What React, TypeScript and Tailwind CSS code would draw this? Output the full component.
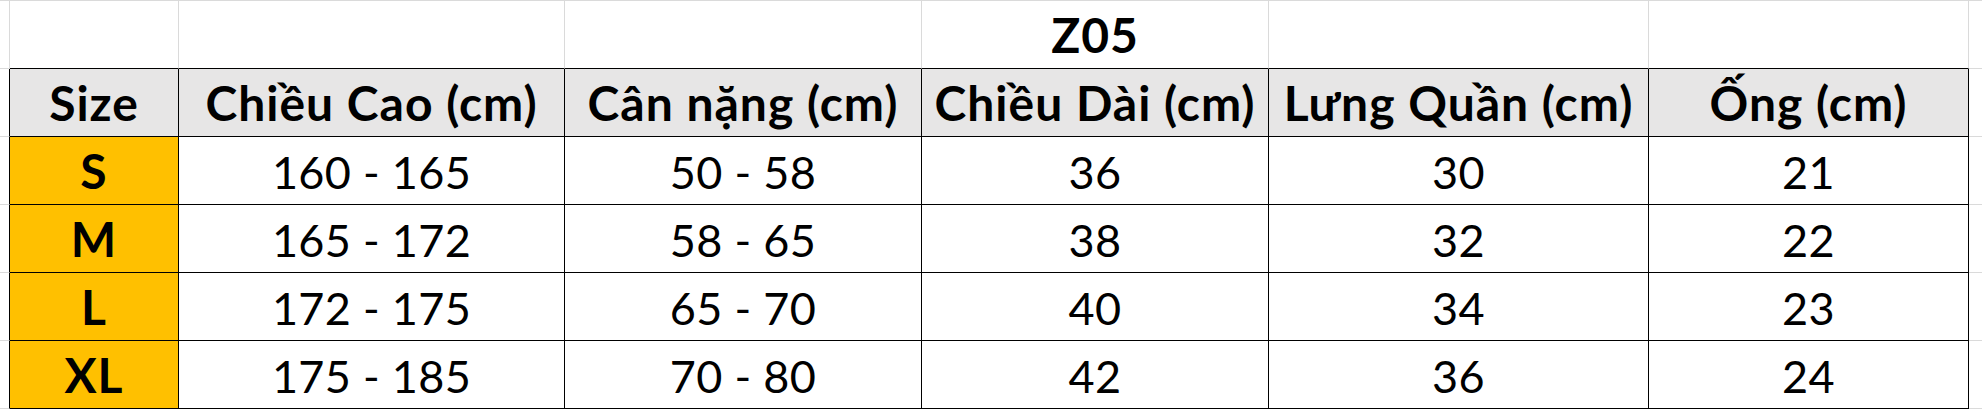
const cols = ["w-[10px]", "w-[169px]", "w-[386px]", "w-[357px]", "w-[347px]", "w-[380px]", "w-[320px]", "flex-1"];

const headers = ["Size", "Chiều Cao (cm)", "Cân nặng (cm)", "Chiều Dài (cm)", "Lưng Quần (cm)", "Ống (cm)"];

const rows = [
  ["S", "160 - 165", "50 - 58", "36", "30", "21"],
  ["M", "165 - 172", "58 - 65", "38", "32", "22"],
  ["L", "172 - 175", "65 - 70", "40", "34", "23"],
  ["XL", "175 - 185", "70 - 80", "42", "36", "24"],
];

const font = "font-['Lato','Liberation_Sans',sans-serif]";
const bold = "text-[48px] leading-none font-bold tracking-[1px] whitespace-nowrap";
const normal = "text-[45px] leading-none tracking-[0.3px] whitespace-nowrap";

export default function App() {
  return (
    <div className={`w-[1982px] h-[411px] bg-white text-black overflow-hidden ${font}`}>
      {/* title row */}
      <div className="flex h-[69px] border-t border-[#dadada]">
        <div className={`${cols[0]} border-r border-b border-[#dadada]`} />
        {[1, 2, 3, 4, 5, 6].map((i) => (
          <div
            key={i}
            className={`${cols[i]} border-r border-r-[#dadada] border-b border-b-black flex items-end justify-center pb-[9px]`}
          >
            {i === 4 && <span className={bold}>Z05</span>}
          </div>
        ))}
        <div className={`${cols[7]} border-b border-[#dadada]`} />
      </div>

      {/* header row */}
      <div className="flex h-[68px]">
        <div className={`${cols[0]} border-r border-r-black border-b border-b-[#dadada]`} />
        {headers.map((h, i) => (
          <div
            key={h}
            className={`${cols[i + 1]} bg-[#e7e6e6] border-r border-b border-black flex items-end justify-center pb-[9px]`}
          >
            <span className={bold}>{h}</span>
          </div>
        ))}
        <div className={`${cols[7]} border-b border-[#dadada]`} />
      </div>

      {rows.map((r) => (
        <div key={r[0]} className="flex h-[68px]">
          <div className={`${cols[0]} border-r border-r-black border-b border-b-[#dadada]`} />
          {r.map((v, i) => (
            <div
              key={i}
              className={`${cols[i + 1]} ${i === 0 ? "bg-[#ffc000]" : "bg-white"} border-r border-b border-black flex items-end justify-center pb-[9px]`}
            >
              <span className={i === 0 ? bold : normal}>{v}</span>
            </div>
          ))}
          <div className={`${cols[7]} border-b border-[#dadada]`} />
        </div>
      ))}
    </div>
  );
}
